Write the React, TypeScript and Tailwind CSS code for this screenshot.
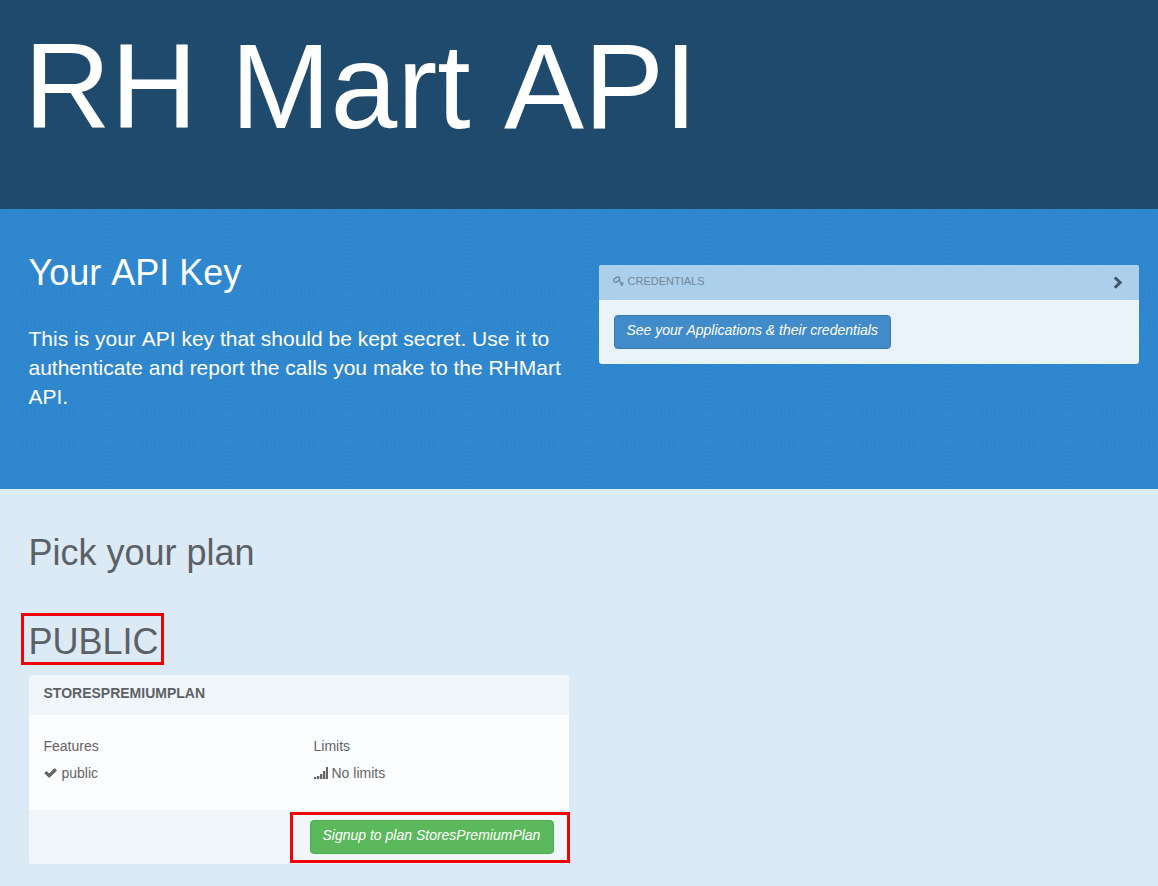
import React from "react";

function KeyIcon() {
  return (
    <svg className="block h-[11px] w-[11px]" viewBox="0 0 11 11" fill="none" stroke="currentColor">
      <path d="M6 1.2 C4.4 .2 .6 2.8 .8 4.8 C1 6.9 3.4 6.7 5.1 5 C6.8 3.3 7.4 2.1 6 1.2 Z" strokeWidth="1.4" />
      <path d="M6.2 4.4 L10 9.3 M7.9 6.8 L6.8 7.8 M9.2 8.3 L8 9.6 M8.8 7.5 L10.6 6.8" strokeWidth="1.3" />
    </svg>
  );
}

function ChevronIcon() {
  return (
    <svg className="block h-[14px] w-[10px]" viewBox="0 0 10 14" fill="currentColor">
      <path d="M.7 2.5 2.9.4 9.3 6.6 2.9 12.8.7 10.7 5 6.6Z" />
    </svg>
  );
}

function CheckIcon() {
  return (
    <svg className="block h-[14px] w-[14px]" viewBox="0 0 14 14" fill="currentColor">
      <path d="M.2 7.2 2.5 4.9 5.2 7.4 10.6 2.1 13 4.4 5.3 12.1Z" />
    </svg>
  );
}

function SignalIcon() {
  return (
    <svg className="block h-[14px] w-[14px]" viewBox="0 0 14 14" fill="currentColor">
      <path d="M0 11h2.3v2H0zM3 10h2.3v3H3zM6 8h2.3v5H6zM9 5h2.3v8H9zM12 1h2v12h-2z" />
    </svg>
  );
}

const pattern =
  "bg-[radial-gradient(circle_at_center,rgba(0,0,0,0.025)_0px,transparent_2px,transparent_3px,rgba(0,0,0,0.03)_5px,transparent_7px,rgba(0,0,0,0.03)_9px,transparent_11px,rgba(0,0,0,0.03)_13px,rgba(0,0,0,0.01)_15px,rgba(0,0,0,0.025)_18px)] bg-[size:30px_30px] bg-[position:3px_9px]";

const faintPattern =
  "bg-[radial-gradient(circle_at_center,rgba(0,0,0,0.02)_0px,transparent_2px,transparent_3px,rgba(0,0,0,0.025)_5px,transparent_7px,rgba(0,0,0,0.025)_9px,transparent_11px,rgba(0,0,0,0.025)_13px,rgba(0,0,0,0.01)_15px,rgba(0,0,0,0.02)_18px)] bg-[size:30px_30px] bg-[position:3px_9px]";

export default function App() {
  return (
    <div className="h-[886px] w-full overflow-hidden bg-[#dceaf5] font-['Liberation_Sans',Arial,sans-serif] text-sm text-[#646464]">
      <header className={`h-[209px] bg-[#1f4b6e] pt-[17px] pl-6 ${faintPattern}`}>
        <h1 className="text-[120px] leading-[138px] whitespace-nowrap text-white">
          RH Mart <span className="inline-block">API</span>
        </h1>
      </header>

      <section className={`flex h-[280px] gap-[30.5px] bg-[#3089d1] pl-[28.5px] text-white ${pattern}`}>
        <div className="w-[540px] pt-11">
          <h2 className="text-[36px] leading-[40px]">
            Your <span className="inline-block">API</span> Key
          </h2>
          <p className="mt-[31px] text-[21px] leading-[29px]">
            This is your <span className="inline-block">API</span> key that should be kept secret. Use it to authenticate and report the calls you make to the RHMart API.
          </p>
        </div>
        <div className="mt-14 h-[99px] w-[540px] overflow-hidden rounded-[3px] bg-[#eaf3fa]">
          <div className="flex h-[35px] items-start justify-between bg-[#accfeb] pr-4 pl-[14px]">
            <div className="flex items-center gap-[3.5px] pt-[10px] text-[11px] leading-[13px] text-[#71899b]">
              <KeyIcon />
              <span>CREDENTIALS</span>
            </div>
            <div className="pt-[11px] text-[#42586a]">
              <ChevronIcon />
            </div>
          </div>
          <button className="mt-[15px] ml-[15px] h-[34px] w-[277px] rounded-[4px] border border-[#397ab4] bg-[#428bca] pt-1 pb-2 pl-[11.5px] text-left leading-5 whitespace-nowrap text-white italic">
            See your <span className="inline-block">Applications</span> &amp; their credentials
          </button>
        </div>
      </section>

      <section className="relative pt-11 pl-[29px]">
        <h2 className="-ml-[0.5px] text-[36px] leading-[40px] text-[#5b6166]">Pick your plan</h2>
        <h2 className="mt-[49px] -ml-[0.5px] text-[36px] leading-[40px] text-[#5b6166]">PUBLIC</h2>
        <div className="absolute top-[124px] left-[21px] h-[52px] w-[143px] border-3 border-[#ee0406]" />

        <div className="mt-[13px] h-[189px] w-[540px] overflow-hidden rounded-[3px] bg-[#f1f6fb]">
          <h3 className="h-10 pt-2 pl-[14.5px] leading-5 font-bold text-[#5d6266]">STORESPREMIUMPLAN</h3>
          <div className="grid h-[95px] grid-cols-2 bg-[#fcfdff] pt-[21px] pl-[14.5px]">
            <div className="w-[255px]">
              <p className="leading-5">Features</p>
              <div className="mt-[7px] flex items-center gap-1 leading-5">
                <CheckIcon />
                <span>public</span>
              </div>
            </div>
            <div className="pl-[7.25px]">
              <p className="leading-5">Limits</p>
              <div className="mt-[7px] flex items-center gap-1 leading-5">
                <SignalIcon />
                <span>No limits</span>
              </div>
            </div>
          </div>
          <div className="flex h-[54px] justify-end pt-[10px] pr-[15px]">
            <button className="h-[34px] w-[244px] rounded-[4px] border border-[#4cae4c] bg-[#5cb85c] pt-1 pb-2 pl-[11.5px] text-left leading-5 whitespace-nowrap text-white italic">
              Signup to plan StoresPremiumPlan
            </button>
          </div>
        </div>
        <div className="absolute top-[323px] left-[290px] h-[51px] w-[280px] border-3 border-[#ee0406]" />
      </section>
    </div>
  );
}
